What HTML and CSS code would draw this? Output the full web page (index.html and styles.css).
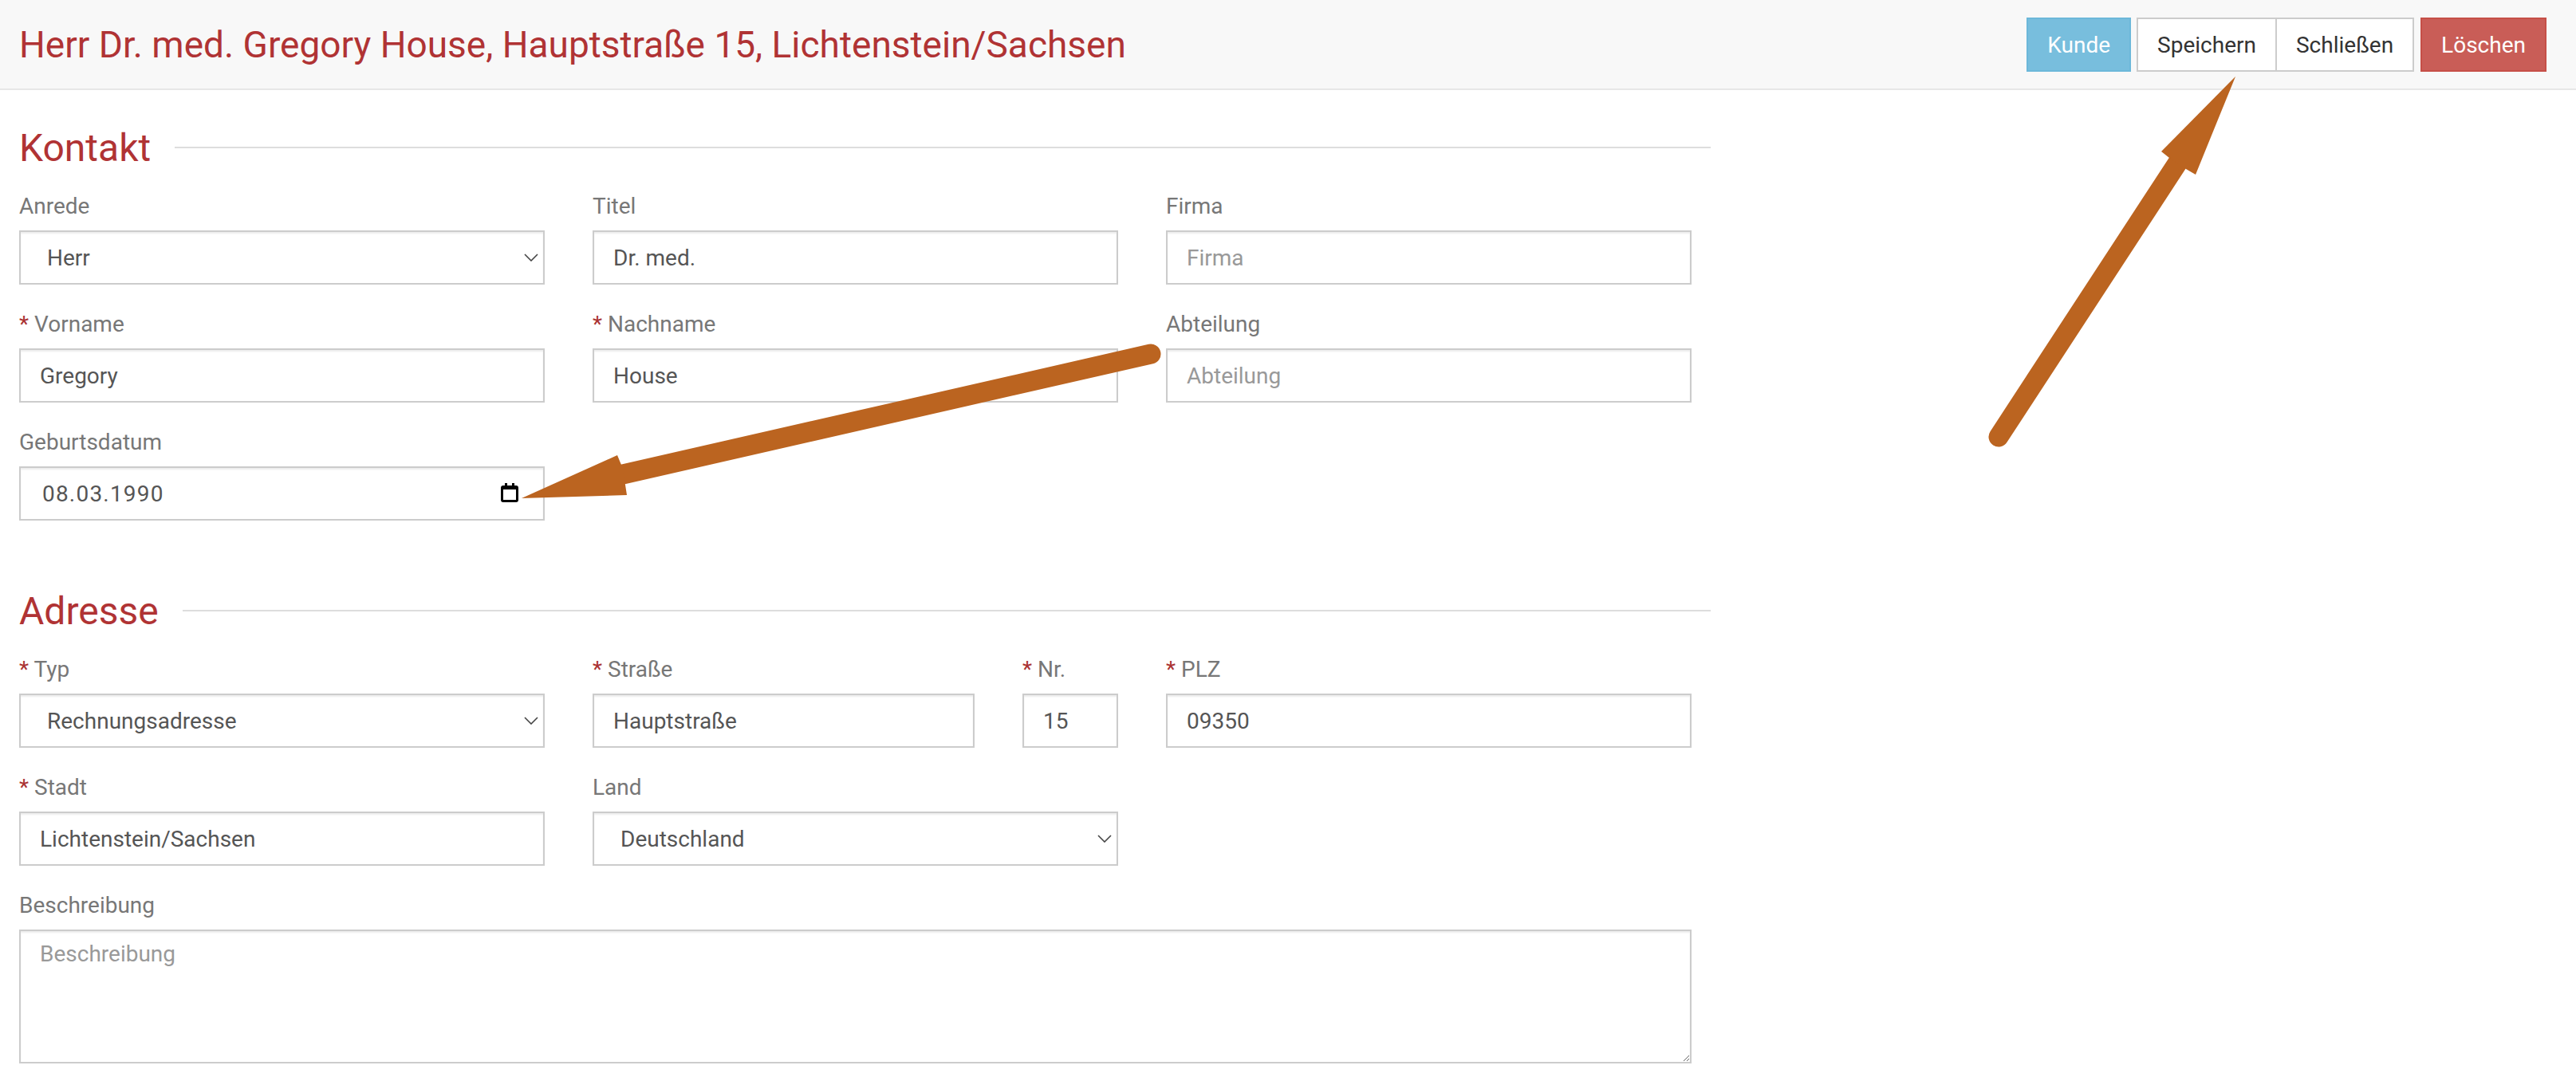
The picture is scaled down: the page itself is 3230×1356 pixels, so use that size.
FILE: index.html
```html
<!DOCTYPE html>
<html lang="de">
<head>
<meta charset="utf-8">
<title>Kontakt</title>
<link rel="stylesheet" href="styles.css">
</head>
<body>
<header class="topbar">
  <h1 class="page-title">Herr Dr. med. Gregory House, Hauptstraße 15, Lichtenstein/Sachsen</h1>
  <div class="actions">
    <button class="btn btn-info" type="button">Kunde</button>
    <div class="btn-group">
      <button class="btn btn-default" type="button">Speichern</button>
      <button class="btn btn-default" type="button">Schließen</button>
    </div>
    <button class="btn btn-danger" type="button">Löschen</button>
  </div>
</header>
<main class="content">
  <section class="section">
    <h2 class="section-title"><span>Kontakt</span></h2>
    <div class="form-grid">
      <div class="field"><label>Anrede</label>
        <div class="select-wrap"><select class="control"><option>Herr</option></select>
          <svg class="chevron" viewBox="0 0 18 10"><path d="M1 1l8 8 8-8"/></svg></div></div>
      <div class="field"><label>Titel</label><input class="control" value="Dr. med."></div>
      <div class="field"><label>Firma</label><input class="control" placeholder="Firma"></div>
      <div class="field"><label><b>*</b> Vorname</label><input class="control" value="Gregory"></div>
      <div class="field"><label><b>*</b> Nachname</label><input class="control" value="House"></div>
      <div class="field"><label>Abteilung</label><input class="control" placeholder="Abteilung"></div>
      <div class="field"><label>Geburtsdatum</label>
        <div class="date-wrap"><input class="control date" value="08.03.1990">
          <svg class="cal" viewBox="0 0 22 24"><path d="M5 0h3v3h6V0h3v3h2a3 3 0 0 1 3 3v15a3 3 0 0 1-3 3H3a3 3 0 0 1-3-3V6a3 3 0 0 1 3-3h2zM3 8v13h16V8z"/></svg></div></div>
    </div>
  </section>
  <section class="section section-next">
    <h2 class="section-title"><span>Adresse</span></h2>
    <div class="form-grid">
      <div class="field"><label><b>*</b> Typ</label>
        <div class="select-wrap"><select class="control"><option>Rechnungsadresse</option></select>
          <svg class="chevron" viewBox="0 0 18 10"><path d="M1 1l8 8 8-8"/></svg></div></div>
      <div class="split">
        <div class="field"><label><b>*</b> Straße</label><input class="control" value="Hauptstraße"></div>
        <div class="field"><label><b>*</b> Nr.</label><input class="control" value="15"></div>
      </div>
      <div class="field"><label><b>*</b> PLZ</label><input class="control" value="09350"></div>
      <div class="field"><label><b>*</b> Stadt</label><input class="control" value="Lichtenstein/Sachsen"></div>
      <div class="field field-wide"><label>Land</label>
        <div class="select-wrap"><select class="control"><option>Deutschland</option></select>
          <svg class="chevron" viewBox="0 0 18 10"><path d="M1 1l8 8 8-8"/></svg></div></div>
      <div class="field field-full"><label>Beschreibung</label><textarea class="control area" placeholder="Beschreibung"></textarea></div>
    </div>
  </section>
</main>
<svg class="annotations" viewBox="0 0 3230 1356">
  <path class="arrow-shaft" d="M2506 548L2730 205"/>
  <polygon class="arrow-head" points="2803,96 2753,219 2741,212 2720,198 2710,190"/>
  <path class="arrow-shaft" d="M1443 444L781 595"/>
  <polygon class="arrow-head" points="654,625 774,571 779,583 784,608 786,621"/>
</svg>
</body>
</html>
```
FILE: styles.css
```css
* { box-sizing: border-box; }
html, body { margin: 0; padding: 0; }
body {
  width: 3230px;
  height: 1356px;
  overflow: hidden;
  position: relative;
  background: #fff;
  font-family: Roboto, "Liberation Sans", sans-serif;
  font-size: 28px;
  color: #555;
}
.topbar {
  height: 113px;
  display: flex;
  align-items: flex-start;
  justify-content: space-between;
  padding: 22px 37px 0 24px;
  background: #f8f8f8;
  border-bottom: 2px solid #e7e7e7;
}
.page-title {
  margin: 0;
  font-size: 46px;
  line-height: 68px;
  font-weight: 400;
  color: #b03334;
}
.actions { display: flex; gap: 7px; }
.btn-group { display: flex; }
.btn-group .btn + .btn { margin-left: -2px; }
.btn {
  height: 68px;
  padding: 0 24px;
  border: 2px solid #ccc;
  border-radius: 0;
  font-family: inherit;
  font-size: 28px;
  background: #fff;
  color: #333;
}
.btn-info { background: #78bedd; border-color: #6cb8da; color: #fff; }
.btn-danger { background: #c95d57; border-color: #c64f47; color: #fff; margin-left: 1px; }
.content { padding: 36px 0 0 24px; width: 2145px; }
.section-next { margin-top: 77px; }
.section-title {
  margin: 0 0 18px;
  height: 72px;
  display: flex;
  align-items: center;
  gap: 30px;
  font-size: 48px;
  font-weight: 400;
  color: #b03334;
}
.section-title::after {
  content: "";
  flex: 1;
  height: 2px;
  background: #ddd;
}
.form-grid {
  display: grid;
  grid-template-columns: repeat(3, 659px);
  column-gap: 60px;
  row-gap: 30px;
}
.split { display: grid; grid-template-columns: 479px 120px; column-gap: 60px; }
.field-full { grid-column: 1 / -1; }
.field-wide { grid-column: 2; }
label {
  display: block;
  height: 40px;
  margin-bottom: 10px;
  line-height: 40px;
  color: #777;
  font-size: 28px;
}
label b { font-weight: 400; color: #a33; }
.control {
  display: block;
  width: 100%;
  height: 68px;
  padding: 0 24px;
  border: 2px solid #ccc;
  border-radius: 0;
  background: #fff;
  box-shadow: inset 0 2px 2px rgba(0,0,0,.075);
  font-family: inherit;
  font-size: 28px;
  color: #555;
  outline: 0;
}
.control::placeholder { color: #999; opacity: 1; }
select.control { appearance: none; -webkit-appearance: none; padding-left: 33px; }
.select-wrap, .date-wrap { position: relative; }
.chevron {
  position: absolute;
  right: 8px;
  top: 29px;
  width: 18px;
  height: 10px;
  fill: none;
  stroke: #444;
  stroke-width: 1.6;
}
.date { padding-left: 27px; letter-spacing: 1.2px; }
.cal { position: absolute; right: 33px; top: 21px; width: 22px; height: 24px; fill: #000; }
.area { height: 168px; padding: 12px 24px; resize: both; }
.annotations { position: absolute; left: 0; top: 0; width: 3230px; height: 1356px; pointer-events: none; }
.arrow-shaft { fill: none; stroke: #bb6420; stroke-width: 25; stroke-linecap: round; }
.arrow-head { fill: #bb6420; }
```
